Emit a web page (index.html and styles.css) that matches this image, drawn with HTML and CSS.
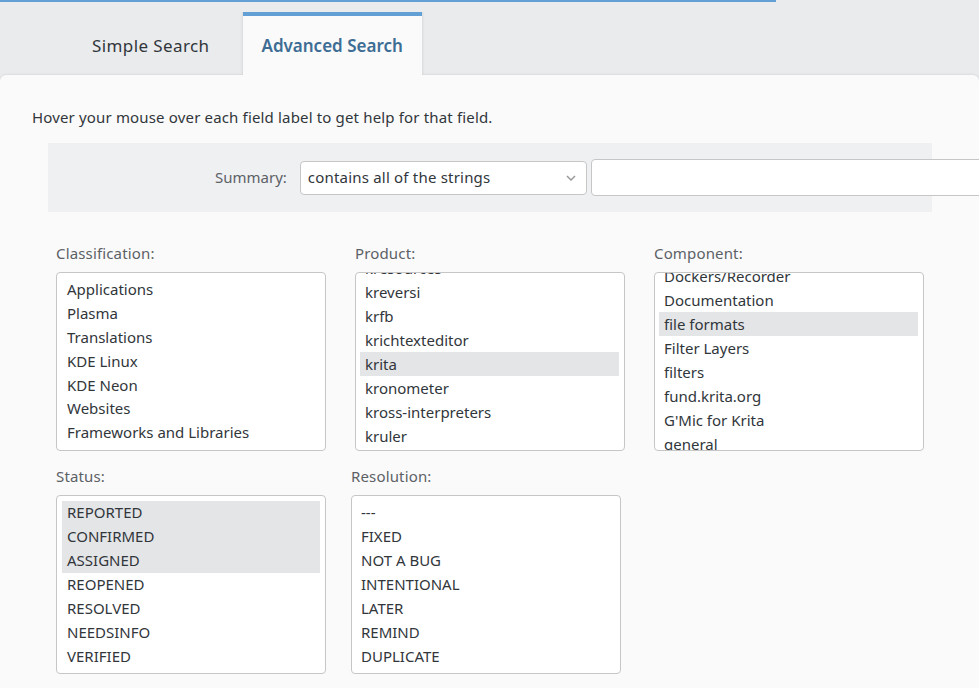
FILE: index.html
```html
<!DOCTYPE html>
<html lang="en">
<head>
    <meta charset="UTF-8">
    <title>Advanced Search</title>
    <link rel="stylesheet" href="styles.css">
</head>
<body>
    <div class="progress"></div>

    <nav class="tabs">
        <a class="tab">Simple Search</a>
        <a class="tab active">Advanced Search</a>
    </nav>

    <main class="panel">
        <p class="intro">Hover your mouse over each field label to get help for that field.</p>

        <div class="summary">
            <label class="summary-label">Summary:</label>
            <div class="select">
                <span>contains all of the strings</span>
                <svg class="chevron" width="10" height="6" viewBox="0 0 10 6"><path d="M1 1l4 4 4-4" fill="none" stroke="#9a9a9a" stroke-width="1.5"/></svg>
            </div>
            <div class="text-input"></div>
        </div>

        <div class="row-top">
            <div class="field">
                <label>Classification:</label>
                <div class="listbox tight">
                    <div class="option">Applications</div>
                    <div class="option">Plasma</div>
                    <div class="option">Translations</div>
                    <div class="option">KDE Linux</div>
                    <div class="option">KDE Neon</div>
                    <div class="option">Websites</div>
                    <div class="option">Frameworks and Libraries</div>
                </div>
            </div>
            <div class="field">
                <label>Product:</label>
                <div class="listbox inset scrolled product-list">
                    <div class="option">kresources</div>
                    <div class="option">kreversi</div>
                    <div class="option">krfb</div>
                    <div class="option">krichtexteditor</div>
                    <div class="option selected">krita</div>
                    <div class="option">kronometer</div>
                    <div class="option">kross-interpreters</div>
                    <div class="option">kruler</div>
                </div>
            </div>
            <div class="field">
                <label>Component:</label>
                <div class="listbox inset scrolled component-list">
                    <div class="option">Dockers/Recorder</div>
                    <div class="option">Documentation</div>
                    <div class="option selected">file formats</div>
                    <div class="option">Filter Layers</div>
                    <div class="option">filters</div>
                    <div class="option">fund.krita.org</div>
                    <div class="option">G'Mic for Krita</div>
                    <div class="option">general</div>
                </div>
            </div>
        </div>

        <div class="row-bottom">
            <div class="field">
                <label>Status:</label>
                <div class="listbox">
                    <div class="option selected">REPORTED</div>
                    <div class="option selected">CONFIRMED</div>
                    <div class="option selected">ASSIGNED</div>
                    <div class="option">REOPENED</div>
                    <div class="option">RESOLVED</div>
                    <div class="option">NEEDSINFO</div>
                    <div class="option">VERIFIED</div>
                </div>
            </div>
            <div class="field">
                <label>Resolution:</label>
                <div class="listbox inset">
                    <div class="option">---</div>
                    <div class="option">FIXED</div>
                    <div class="option">NOT A BUG</div>
                    <div class="option">INTENTIONAL</div>
                    <div class="option">LATER</div>
                    <div class="option">REMIND</div>
                    <div class="option">DUPLICATE</div>
                </div>
            </div>
        </div>
    </main>
</body>
</html>
```

FILE: styles.css
```css
* {
    box-sizing: border-box;
    margin: 0;
    padding: 0;
}

html, body {
    height: 688px;
    overflow: hidden;
}

body {
    background: #e9ebed;
    color: #31363b;
    font-family: 'Noto Sans', sans-serif;
    font-size: 15px;
}

.progress {
    width: 776px;
    height: 2px;
    background: #619fd5;
}

.tabs {
    display: flex;
    height: 73px;
    padding: 10px 0 0 74px;
    position: relative;
    z-index: 1;
}

.tab {
    padding: 0 18px;
    height: 63px;
    line-height: 59px;
    border-top: 4px solid transparent;
    font-size: 17px;
    letter-spacing: 0.4px;
}

.tab.active {
    margin-left: 16px;
    width: 179px;
    background: #fafafa;
    border-top-color: #619fd5;
    box-shadow: 0 0 3px rgba(0, 0, 0, 0.15);
    clip-path: inset(0 -4px 0 -4px);
    color: #3d6d94;
    font-weight: 600;
    letter-spacing: 0;
}

.panel {
    height: 613px;
    padding: 32px 0 0 32px;
    background: #fafafa;
    border-radius: 6px 6px 0 0;
    box-shadow: 0 0 3px rgba(0, 0, 0, 0.12);
}

.intro {
    height: 20px;
    line-height: 20px;
    letter-spacing: 0.16px;
}

.summary {
    display: flex;
    align-items: center;
    width: 884px;
    height: 69px;
    margin: 16px 0 0 16px;
    padding-left: 167px;
    background: #eff0f2;
}

.summary-label {
    margin-right: 13px;
    line-height: 18px;
    padding-bottom: 2px;
    color: #5c6166;
    white-space: nowrap;
}

.select {
    display: flex;
    flex-shrink: 0;
    align-items: center;
    justify-content: space-between;
    width: 287px;
    height: 34px;
    padding: 0 10px 0 7px;
    margin-right: 4px;
    background: #fff;
    border: 1px solid #c6c6c6;
    border-radius: 4px;
}

.select span {
    padding-bottom: 2px;
    letter-spacing: 0.2px;
}

.text-input {
    flex-shrink: 0;
    width: 392px;
    height: 37px;
    background: #fff;
    border: 1px solid #c6c6c6;
    border-radius: 4px;
}

.row-top, .row-bottom {
    display: flex;
    margin-left: 24px;
}

.row-top {
    gap: 29px;
    margin-top: 32px;
}

.row-bottom {
    gap: 25px;
    margin-top: 16px;
}

.field {
    width: 270px;
}

.field label {
    display: block;
    height: 20px;
    margin-bottom: 8px;
    line-height: 18px;
    letter-spacing: 0.15px;
    color: #5c6166;
}

.listbox {
    height: 179px;
    padding: 5px;
    overflow: hidden;
    background: #fff;
    border: 1px solid #c6c6c6;
    border-radius: 4px;
}

.option {
    height: 24px;
    padding-left: 5px;
    line-height: 22px;
    white-space: nowrap;
}

.tight .option {
    height: 23.9px;
}

.inset {
    padding-left: 4px;
}

.scrolled .option {
    line-height: 24px;
}

.product-list .option:first-child {
    margin-top: -22px;
}

.component-list .option:first-child {
    margin-top: -14px;
}

.selected {
    background: #e4e5e7;
}
```
